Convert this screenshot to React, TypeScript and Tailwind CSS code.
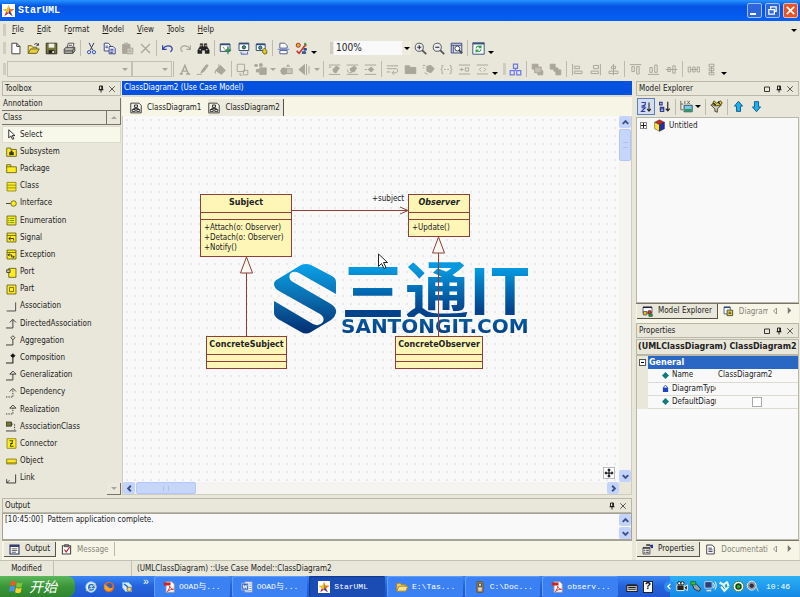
import React from "react";

type IconProps = { name: string; className?: string };

const Svg = ({ children, className = "size-[14px]" }: { children: React.ReactNode; className?: string }) => (
  <svg viewBox="0 0 16 16" className={className + " shrink-0"} fill="none" stroke="#222" strokeWidth="1.2" aria-hidden="true">
    {children}
  </svg>
);

const G = "#a9a799";

const shapes: Record<string, React.ReactNode> = {
  new: <path d="M3.5 1.5h6l4 4v9h-10zM9.5 1.5v4h4" fill="#fff" stroke="#444" />,
  open: (
    <>
      <path d="M1.500 14V4.500h4l1.500 2h5v2" fill="#f5e67a" stroke="#6b6420" />
      <path d="M1.500 14l3-5.500h10.500l-3 5.500z" fill="#e8cf3c" stroke="#6b6420" />
      <path d="M9 3c2-2 4-1 5 1M14 1.500V4h-2.500" stroke="#333" />
    </>
  ),
  save: (
    <>
      <path d="M1.500 1.500h13v13h-13z" fill="#77763a" stroke="#33331c" />
      <path d="M4.500 2h7v5h-7z" fill="#f1f1ea" stroke="none" />
      <path d="M4.500 10h7v4h-7z" fill="#222" stroke="none" />
      <path d="M9 11h2v2.500H9z" fill="#eee" stroke="none" />
    </>
  ),
  print: (
    <>
      <path d="M5 7l1.500-5.500h7L12 7" fill="#fff" stroke="#555" />
      <path d="M1.500 8.500L4 6.500h10.500V11l-2.500 3H1.500z" fill="#b5b4ac" stroke="#444" />
      <path d="M2 11h10M12 14v-4l2-3M7 4h4" stroke="#444" />
    </>
  ),
  cut: (
    <>
      <path d="M5 1l4.500 9M11 1L6.500 10" stroke="#333a66" />
      <circle cx="5" cy="12.500" r="2" stroke="#2d4fc0" />
      <circle cx="11" cy="12.500" r="2" stroke="#2d4fc0" />
    </>
  ),
  copy: (
    <>
      <path d="M1.500 1.500h5l2.500 2.500v7H1.500z" fill="#fff" stroke="#3a4684" />
      <path d="M7.500 5.500h5l2.500 2.500v6.500H7.500zM9 9h4M9 11h4M9 13h3M3 5h3M3 7h3" fill="#eef" stroke="#3a4684" />
    </>
  ),
  paste: (
    <>
      <path d="M2 3h9v11H2z" fill={G} stroke={G} />
      <path d="M4.500 1.500h4v2h-4z" fill="#ddd" stroke={G} />
      <path d="M7.500 7.500h7v7h-7z" fill="#d6d4c8" stroke={G} />
      <path d="M9 10h4M9 12h4" stroke={G} />
    </>
  ),
  del: <path d="M2.500 2.500l11 11M13.500 2.500l-11 11" stroke={G} strokeWidth="1.600" />,
  undo: <path d="M2 4v5h5M2.500 8.500C5 4 12 3.500 13.500 7c.8 2-.5 4-2 5" stroke="#3244a8" strokeWidth="1.500" />,
  redo: <path d="M14 4v5H9M13.500 8.500C11 4 4 3.500 2.500 7c-.8 2 .5 4 2 5" stroke={G} strokeWidth="1.400" />,
  find: (
    <>
      <path d="M4 2h3v3l1 1 1-1V2h3v3l3 5v4h-5v-4H6v4H1v-4l3-5z" fill="#222" stroke="#222" strokeWidth=".6" />
      <path d="M3 9.500h2M11 9.500h2M5 3.500v2M11 3.500v2" stroke="#ddd" />
    </>
  ),
  win1: (
    <>
      <path d="M1.500 2.500h12v9h-12z" fill="#fff" stroke="#334b78" />
      <path d="M1.500 3h12" stroke="#334b78" strokeWidth="2" />
      <path d="M11 5l1 4 3 1-3 1-1 4-1-4-3-1 3-1z" fill="#3a9a52" stroke="#287540" strokeWidth=".6" />
      <path d="M5 6l2 3" stroke="#9a9420" />
    </>
  ),
  win2: (
    <>
      <path d="M2.500 1.500h12v9h-12z" fill="#fff" stroke="#334b78" />
      <path d="M2.500 2h12" stroke="#334b78" strokeWidth="2" />
      <path d="M5 12v3h8v-3M7 14h1" stroke="#556dcc" />
      <circle cx="8.500" cy="6.500" r="2" fill="#3c9a60" stroke="#246" />
    </>
  ),
  win3: (
    <>
      <path d="M1.500 2.500h11v8h-11z" fill="#fff" stroke="#334b78" />
      <path d="M1.500 3h11" stroke="#334b78" strokeWidth="2" />
      <circle cx="6.500" cy="7" r="2" fill="#3aa0a0" stroke="#246" />
      <path d="M9.500 9.500l2-2 3 3V14l-3 1-2-2z" fill="#d8c832" stroke="#7b6c10" />
    </>
  ),
  pagebreak: (
    <>
      <path d="M3.500 1.500h6l3 3v3h-9zM3.500 10.500h9v4h-9z" fill="#fff" stroke="#555f8e" />
      <path d="M1 9h14" stroke="#5a78d8" />
    </>
  ),
  verify: (
    <>
      <circle cx="4" cy="4" r="2.500" fill="#e0b830" stroke="#a52c22" />
      <path d="M2 11l3 3 6-8 3-3" stroke="#c8362a" strokeWidth="2" />
      <path d="M11 8h3v2h-3zM9 12h4v2H9z" fill="#3d72c8" stroke="#284a88" />
      <circle cx="12.500" cy="2.500" r="1.500" fill="#3a9a52" stroke="none" />
    </>
  ),
  zoomin: (
    <>
      <circle cx="6.500" cy="6.500" r="5" fill="#e9eaf2" stroke="#555" />
      <path d="M10 10l5 5" stroke="#555" strokeWidth="2.200" />
      <path d="M4 6.500h5M6.500 4v5" stroke="#333" strokeWidth="1.400" />
    </>
  ),
  zoomout: (
    <>
      <circle cx="6.500" cy="6.500" r="5" fill="#e9eaf2" stroke="#555" />
      <path d="M10 10l5 5" stroke="#555" strokeWidth="2.200" />
      <path d="M4 6.500h5" stroke="#333" strokeWidth="1.400" />
    </>
  ),
  fit: (
    <>
      <path d="M1.500 1.500h13v12h-13zM1.500 4h13M4 4v9" fill="#dfe3f2" stroke="#3c4a7c" />
      <circle cx="9" cy="8" r="3" fill="#fff" stroke="#444" />
      <path d="M11 10l4 4" stroke="#444" strokeWidth="2" />
    </>
  ),
  refresh: (
    <>
      <path d="M1 1h14v14H1z" fill="#fff" stroke="#3a5378" />
      <path d="M1 2h14" stroke="#3a5378" strokeWidth="2" />
      <path d="M5 8c0-3 4-4 5.500-1.500M11 9c0 3-4 4-5.500 1.500M11 4v3H8M5 13v-3h3" stroke="#2c9a46" strokeWidth="1.300" />
    </>
  ),
  fontA: <path d="M2 13.500h4M10 13.500h5M4 13L8.500 3l4 10M5.500 10h6" stroke={G} strokeWidth="1.800" />,
  pen: <path d="M1 14h6M6 12l2-4 5-6 2 1-5 7-3 2z" fill={G} stroke={G} />,
  fill: <path d="M2 9l6-6 6 6-5 5zM6 1v6M2 9c-1 2-1 3 0 4" fill={G} stroke={G} />,
  dashbox: (
    <>
      <path d="M1.500 1.500h9v9h-9z" stroke={G} />
      <path d="M9 9h5.500v5.500H9zM5 12v3h3" stroke={G} />
    </>
  ),
  blocks: <path d="M7 6h8v8H7zM1 2h3v2H1zM3 8h3v3H3zM7 1h3v3H7z" fill={G} stroke={G} />,
  shapes: (
    <>
      <circle cx="5" cy="10" r="4" fill={G} stroke={G} />
      <path d="M8 5l2-3 2 3M8 7h7v6H8z" fill="#c9c7b9" stroke={G} />
    </>
  ),
  flip: <path d="M10.500 1v14M1 8l7-6v12zM13.500 4v9" fill={G} stroke={G} />,
  suppress: (
    <>
      <path d="M1 2.500h14M1 14h14M1 5h3" stroke={G} />
      <path d="M6 8l4-4 4 2-4 6-3-1z" fill={G} stroke={G} />
    </>
  ),
  suppress2: (
    <>
      <path d="M1 2.500h14M1 14h14M2 8c-1 4 4 5 6 3" stroke={G} />
      <path d="M5 7l5-3 3 2-3 5-4-1z" fill={G} stroke={G} />
    </>
  ),
  suppress3: (
    <>
      <path d="M1 2.500h14M1 14h14M1 8h3" stroke={G} />
      <path d="M5 8l4-3 3 3-3 3z" fill={G} stroke={G} />
    </>
  ),
  wrap: <path d="M1 3.500h14M1 7h12c2 0 2 5-1 5H8M1 11h4M10 9.500L7.500 12l2.500 2.500" stroke={G} />,
  folder: <path d="M1.500 13V3.500h5l1.500 2h6.500V13z" fill={G} stroke={G} />,
  stereo: <path d="M6 4l5-1 4 4-4 5-5-2zM1 3h3M1 6h2M3 12l4 2" fill={G} stroke={G} />,
  braces: <path d="M4 3H2.500v4L1 8l1.500 1v4H4M12 3h1.500v4L15 8l-1.500 1v4H12M5 8h2M9 8h2" stroke={G} />,
  plusop: <path d="M1 2.500h14M1 13.500h14M2 8h5M4.500 6v4M9 6h4v4H9z" stroke={G} />,
  angles: <path d="M1 2.500h14M1 13.500h14M6.500 5.500L4 8l2.500 2.500M9.500 5.500L12 8l-2.500 2.500" stroke={G} />,
  tree: <path d="M5.500 1.500h5v5h-5zM1.500 9.500h5v5h-5zM9.500 9.500h5v5h-5zM8 6.500v3" stroke="#6f78e0" strokeWidth="1.500" fill="#e6e6fa" />,
  front: (
    <>
      <path d="M1.500 1.500h7v6h-7zM8.500 9.500h6v5h-6z" fill={G} stroke={G} />
      <path d="M4.500 5h8v7h-8z" fill="#c3c1b3" stroke={G} />
    </>
  ),
  back: <path d="M1.500 1.500h6v6h-6zM8.500 8.500h6v6h-6zM6 6h5v4H6z" fill={G} stroke={G} />,
  alignL: <path d="M2 1v14M4.500 4h6v3h-6zM4.500 10h9v3h-9z" stroke={G} />,
  alignR: <path d="M14 1v14M5.500 3h6v4h-6zM2.500 10h9v3h-9z" stroke={G} />,
  alignC: <path d="M8 1v14M5.500 4h5v3h-5zM2.500 10h11v3h-11z" stroke={G} />,
  alignT: <path d="M1 2h14M3.500 4.500h3v6h-3zM9.500 4.500h3v9h-3z" stroke={G} />,
  alignB: <path d="M1 14h14M3.500 5.500h3v6h-3zM9.500 2.500h3v9h-3z" stroke={G} />,
  alignM: <path d="M1 8h14M3.500 5.500h3v5h-3zM9.500 3.500h3v9h-3z" stroke={G} />,
  spaceH: <path d="M1.500 5h3v6h-3zM7 5h3v6H7zM12.500 5h3v6h-3zM4 8h9" stroke={G} />,
  spaceV: <path d="M5 1.500h6v3H5zM5 6.500h6v3H5zM5 11.500h6v3H5zM8 4v9" stroke={G} />,
  classdoc: (
    <>
      <path d="M1 1.500h11l3 3v10H1z" fill="#f4f3e4" stroke="#333" />
      <path d="M6 4h4v3H6zM3 10h4v2.500H3zM9 10h4v2.500H9zM8 7v2M5 10V8.500h6V10" stroke="#222" fill="#fff" />
    </>
  ),
  cursor: <path d="M4 1v12l3-3 2.500 5 2-1L9 9.500h4z" fill="#fff" stroke="#111" />,
  subsystem: (
    <>
      <path d="M1 3h6v2h8v10H1z" fill="#ffee1c" stroke="#5e5a12" />
      <path d="M5 13V9h2V7h2v2h2v4z" fill="#333" stroke="#333" strokeWidth=".6" />
    </>
  ),
  package: <path d="M1 2.500h6v3h8V14H1zM1 5.500h6" fill="#ffee1c" stroke="#5e5a12" />,
  class: <path d="M1.500 2h13v12.500h-13zM1.500 6h13M1.500 10h13" fill="#ffee1c" stroke="#86801a" />,
  interface: (
    <>
      <path d="M0 8h7" stroke="#222" />
      <circle cx="11" cy="8" r="4" fill="#ffee1c" stroke="#5e5a12" />
    </>
  ),
  enum: (
    <>
      <path d="M1.500 1.500h13v13h-13z" fill="#ffee1c" stroke="#5e5a12" />
      <path d="M3 5h2M3 8h2M3 11h2M6 5h6M6 8h6M6 11h6" stroke="#4e8c2c" />
    </>
  ),
  signal: (
    <>
      <path d="M1.500 1.500h13v13h-13zM1.500 5h13" fill="#ffee1c" stroke="#5e5a12" />
      <path d="M7 7L4 9.500 7 12M4 9.500h7v3" stroke="#222" />
    </>
  ),
  exception: (
    <>
      <path d="M1.500 1.500h13v13h-13zM1.500 5h13" fill="#ffee1c" stroke="#5e5a12" />
      <path d="M5 6.500L3 8.500l2 2M3 8.500h5v3h4M10 9.500l2 2-2 2" stroke="#222" />
    </>
  ),
  port: (
    <>
      <path d="M4 2h10.500v13H4z" fill="#ffee1c" stroke="#5e5a12" />
      <path d="M1 4h5v4H1z" fill="#cfc9a0" stroke="#333" />
    </>
  ),
  part: (
    <>
      <path d="M1.500 1.500h13v13h-13z" fill="#ffee1c" stroke="#5e5a12" />
      <path d="M5 5h6v6H5z" stroke="#5e5a12" />
    </>
  ),
  assoc: <path d="M1 14.500h13V2" stroke="#333" />,
  dassoc: <path d="M0 14.500h10V2M5.500 6.500L10 2l4.500 4.500" stroke="#222" />,
  aggr: <path d="M0 14.500h10V7M10 1l3 3-3 3-3-3z" stroke="#222" fill="none" />,
  comp: (
    <>
      <path d="M0 14.500h10V7" stroke="#222" strokeWidth="1.600" />
      <path d="M10 1l3 3-3 3-3-3z" fill="#111" stroke="#111" />
    </>
  ),
  gen: <path d="M0 14.500h10V6M5.500 6L10 1.500 14.500 6z" stroke="#222" />,
  dep: (
    <>
      <path d="M0 14.500h10V3" stroke="#222" strokeDasharray="2 1.500" />
      <path d="M5.500 6.500L10 2l4.500 4.500" stroke="#222" />
    </>
  ),
  real: (
    <>
      <path d="M0 14.500h10V6" stroke="#222" strokeDasharray="2 1.500" />
      <path d="M5.500 6L10 1.500 14.500 6z" stroke="#222" />
    </>
  ),
  aclass: (
    <>
      <path d="M0 1.500h8v6H0z" fill="#77762a" stroke="#333" />
      <path d="M8 4.500h4M12.500 5v8" stroke="#222" strokeDasharray="2 1.500" />
      <path d="M0 14.500h15" stroke="#222" />
    </>
  ),
  connector: (
    <>
      <path d="M1.500 1h13v14h-13z" fill="#ffee1c" stroke="#86801a" />
      <path d="M5 4h5M10 4L6 12M6 12h5M6 8h4" stroke="#222" />
    </>
  ),
  object: <path d="M1 4.500h14v7H1zM1 10h14" fill="#ffe81c" stroke="#77711a" />,
  link: <path d="M1 9v5.500h13V2M1 14.500l4-4" stroke="#222" />,
  sortA: (
    <>
      <path d="M2 2h5v3L2 7h5M2 9h5l-5 5h5" stroke="#2f3da0" strokeWidth="1.500" />
      <path d="M12 2v11M9.500 10.500L12 13.500l2.500-3" stroke="#222" strokeWidth="1.400" />
    </>
  ),
  sortB: (
    <>
      <path d="M2 3h3v3H2zM3 9h4v5H3zM2 11h5" stroke="#2f3da0" strokeWidth="1.500" />
      <path d="M12 2v11M9.500 10.500L12 13.500l2.500-3" stroke="#222" strokeWidth="1.400" />
    </>
  ),
  viewmode: (
    <>
      <path d="M1 1v11h3M1 5h3M6 1v4M9 1l3 4M12 1L9 5" stroke="#666" />
      <path d="M5 6.500h10v8H5z" fill="#7cc8e8" stroke="#356" />
      <path d="M6 11h8v3H6z" fill="#2f9a58" stroke="none" />
    </>
  ),
  filter: (
    <>
      <path d="M1 6h13l-5 5v4l-3-1v-3z" fill="#cfcfc4" stroke="#4c4a2a" />
      <path d="M3 5l2-4 3 3 5-3 2 3-4 3H5z" fill="#e6cf32" stroke="#4c4a2a" />
      <path d="M10 2l2 3M4 4l3 2" stroke="#222" strokeWidth="1.600" />
    </>
  ),
  up: <path d="M8 1.500l5 6H10.500V14h-5V7.500H3z" fill="#19b4ee" stroke="#1a5a94" />,
  down: <path d="M8 14.500l5-6H10.500V2h-5v6.500H3z" fill="#19b4ee" stroke="#1a5a94" />,
  cube: (
    <>
      <path d="M8 1l6 3-6 3-6-3z" fill="#c82820" stroke="#333" strokeWidth=".6" />
      <path d="M2 4l6 3v8l-6-3z" fill="#ffe22a" stroke="#333" strokeWidth=".6" />
      <path d="M14 4L8 7v8l6-3z" fill="#2430a8" stroke="#111" strokeWidth=".6" />
    </>
  ),
  mexp: (
    <>
      <path d="M1.500 1.500h13v9h-13z" fill="#fff" stroke="#334b78" />
      <path d="M1.500 2h13" stroke="#223" strokeWidth="2" />
      <path d="M2 8h5v5H2z" fill="#e0c020" stroke="#554" />
      <circle cx="11" cy="9" r="2.500" fill="#c8352a" stroke="#622" />
      <path d="M10 12h5v3h-5z" fill="#2e9a50" stroke="#263" />
    </>
  ),
  dexp: (
    <>
      <path d="M1.500 1.500h9v10h-9z" fill="#fff" stroke="#334b78" />
      <path d="M1.500 2h9" stroke="#334b78" strokeWidth="2" />
      <path d="M6 6h8v8H6z" fill="#f3dc4a" stroke="#333" />
      <path d="M8 9h4M8 11h4" stroke="#333" />
    </>
  ),
  props: (
    <>
      <path d="M1.500 5h10v9.500h-10z" fill="#fff" stroke="#333" />
      <path d="M1.500 6h10M3 9h2M6 9h4M3 12h2M6 12h4" stroke="#333" strokeWidth="1.500" />
      <path d="M6 1.500h5l2 2h2" stroke="#333" strokeWidth="2" />
      <path d="M13 1h3v5h-3z" fill="#2430a8" stroke="none" />
    </>
  ),
  doc: <path d="M2.500 1.500h8l3 3v10h-11zM5 6h5M5 8.500h6M5 11h6" fill="#fff" stroke="#223" />,
  output: (
    <>
      <path d="M1.500 1.500h13v13h-13z" fill="#fff" stroke="#222c66" strokeWidth="1.600" />
      <path d="M1.500 3h13" stroke="#222c66" strokeWidth="2.500" />
      <path d="M4 7h8M4 9.500h8M4 12h6" stroke="#444" />
    </>
  ),
  message: (
    <>
      <path d="M2 2.500h12v12H2z" fill="#fff" stroke="#444" strokeWidth="1.500" />
      <path d="M5 1h6v3H5z" fill="#888" stroke="#444" />
      <path d="M5 8l2.500 3.500L13 4" stroke="#c02c3c" strokeWidth="1.800" />
    </>
  ),
  star: (
    <>
      <path d="M0 0h16v16H0z" fill="#fff" stroke="none" />
      <path d="M8 1l2 5h5.500L11 9.500l2 5.500-5-3.500z" fill="#e87820" stroke="none" />
      <path d="M8 1L6 6 .5 6.500 5 9.500 8 11.500z" fill="#e8c020" stroke="none" />
      <path d="M5 9.500L3 15l5-3.500z" fill="#d02838" stroke="none" />
      <path d="M9 8l4 7-5-3.500z" fill="#2848a8" stroke="none" />
    </>
  ),
  pin: <path d="M5 2h6v7H5zM9.500 2v7M3 9.500h10M8 10v5" stroke="#111" strokeWidth="1.800" />,
  close: <path d="M2.500 2.500l11 11M13.500 2.500l-11 11" stroke="#333" strokeWidth="1.600" />,
  max: <path d="M3 4h10v9H3z" stroke="#222" strokeWidth="1.800" />,
  ie: (
    <>
      <circle cx="8" cy="8" r="7" fill="#e6f3ff" stroke="#8cc4f6" />
      <path d="M5 8.500h7c0-5-7-5-7 0s5 4 6.500 2" stroke="#2675d0" strokeWidth="2" />
      <path d="M2 12C0 15 6 12 14 3" stroke="#f0d46a" />
    </>
  ),
  firefox: (
    <>
      <circle cx="8" cy="8" r="7" fill="#e8681c" stroke="none" />
      <circle cx="8.500" cy="6.500" r="4" fill="#3460b8" stroke="none" />
      <path d="M2 3c0 3 3 3 5 5s4 2 6 1c-1 5-9 6-11 1z" fill="#f6a42a" stroke="none" />
    </>
  ),
  qq: (
    <>
      <path d="M2 2h8l4 4v8H6l-4-5z" fill="#d6ecff" stroke="#78b8f0" />
      <path d="M4 4l4 3 2 5" stroke="#2768b8" strokeWidth="2" />
      <circle cx="11" cy="11" r="3" fill="#f1d37a" stroke="#86703a" />
    </>
  ),
  pdf: (
    <>
      <path d="M4 1h8l3 3v11H4z" fill="#fff" stroke="#999" />
      <path d="M1 2h9v4H1z" fill="#cc2222" stroke="none" />
      <path d="M6 14c2-3 3-5 3-7 1 3 3 4 5 4-3 0-6 1-8 3z" stroke="#d03030" strokeWidth="1.300" />
    </>
  ),
  word: (
    <>
      <path d="M5 1h10v14H5zM11 4h3M11 7h3M11 10h3M6 13h8" fill="#fff" stroke="#6d8dc8" />
      <path d="M1 3h9v9H1z" fill="#3a66b8" stroke="#fff" strokeWidth=".6" />
      <path d="M3 5l1 5 1.500-4L7 10l1-5" stroke="#fff" />
    </>
  ),
  efolder: (
    <>
      <path d="M1 13V3h5l1 2h6v3" fill="#f2d264" stroke="#a88420" />
      <path d="M1 13.500L4 7h12l-3 6.500z" fill="#fbe58a" stroke="#a88420" />
    </>
  ),
  device: (
    <>
      <path d="M4 1h7l1 1v13H4z" fill="#b89a62" stroke="#5c4a20" />
      <path d="M6 3h4v4H6z" fill="#d8f0d0" stroke="#444" />
      <path d="M6 10h4M6 12h4" stroke="#fff" />
    </>
  ),
  keyboard: <path d="M1 6h14v8H1zM3 8.500h10M3 11h10M2 5h12" fill="#ddd" stroke="#222" strokeWidth="1.500" />,
  camera: (
    <>
      <path d="M1 6h9v7H1zM10 9l4-3v7l-4-3" fill="#222" stroke="#eee" />
      <circle cx="4" cy="4" r="2" fill="#eee" />
      <circle cx="8" cy="4" r="2" fill="#eee" />
    </>
  ),
  usb: (
    <>
      <path d="M2 3l6 2 5 6-2 3-6-3z" fill="#9aa6a6" stroke="#234" />
      <path d="M1 2h6v4H1z" fill="#3abc3a" stroke="#174" />
    </>
  ),
  net: (
    <>
      <path d="M1 2h9v8H1z" fill="#22427c" stroke="#ccd" />
      <path d="M3 13h6" stroke="#ddd" strokeWidth="2" />
      <path d="M11.500 4c1.500 2 1.500 4 0 6M13.500 2c2 3 2 7 0 10" stroke="#fff" />
    </>
  ),
  recycle: (
    <>
      <path d="M2 3l5 3 5-4M4 8l4 5 5-5M7 6l1 7M11 3l2 5" stroke="#dff4ee" strokeWidth="3" />
      <path d="M5 7l3 4M10 5l1 4" stroke="#2e8a8a" />
    </>
  ),
  eye: (
    <>
      <circle cx="8" cy="8" r="6.500" fill="#fff" stroke="#3c8c3c" />
      <circle cx="8" cy="8" r="3" fill="#3cae2a" stroke="#174a17" strokeWidth="2" />
    </>
  ),
  volume: (
    <>
      <circle cx="7" cy="7" r="5.500" fill="#8d95a5" stroke="#e6e6ea" />
      <circle cx="7" cy="7" r="2" fill="#333" />
      <path d="M13 9l2 5" stroke="#ddd" />
    </>
  ),
};

const Icon = ({ name, className }: IconProps) => <Svg className={className}>{shapes[name]}</Svg>;

const Tool = ({ name }: { name: string }) => (
  <button aria-label={name} className="flex h-4 w-[18px] shrink-0 items-center justify-center">
    <Icon name={name} className="size-[13px]" />
  </button>
);
const Tools = ({ names }: { names: string[] }) => (
  <>
    {names.map((n, i) => (
      <Tool key={i} name={n} />
    ))}
  </>
);
const Sep = () => (
  <span className="flex w-1 shrink-0 justify-center">
    <span className="h-4 w-px bg-[#bdbbab]" />
  </span>
);
const Grip = () => <span className="h-3 w-[3px] shrink-0 bg-[#cfcdbe]" />;
const Caret = ({ className = "border-t-black" }: { className?: string }) => (
  <span className={"size-0 shrink-0 border-x-[3px] border-t-[3px] border-x-transparent " + className} />
);
const Overflow = () => (
  <button aria-label="More buttons" className="flex h-4 w-2 shrink-0 items-end justify-center pb-[2px]">
    <Caret />
  </button>
);

const PanelHeader = ({ title, max = false }: { title: string; max?: boolean }) => (
  <header className="flex h-[15px] shrink-0 items-center border border-[#b9b7a8] pr-1 pl-[2px]">
    <h2 className="flex-1">{title}</h2>
    {max && (
      <button aria-label="Maximize" className="mr-1">
        <Icon name="max" className="size-[8px]" />
      </button>
    )}
    <button aria-label="Pin" className="mr-[3px]">
      <Icon name="pin" className="size-[8px]" />
    </button>
    <button aria-label="Close">
      <Icon name="close" className="size-[8px]" />
    </button>
  </header>
);

const ScrollButton = ({ dir }: { dir: "up" | "down" | "left" | "right" }) => {
  const d = { up: "M4 10l4-4 4 4", down: "M4 6l4 4 4-4", left: "M10 4L6 8l4 4", right: "M6 4l4 4-4 4" }[dir];
  return (
    <button aria-label={"Scroll " + dir} className="flex size-3 shrink-0 items-center justify-center rounded-[2px] bg-[#c3d3fb]">
      <svg viewBox="0 0 16 16" className="size-[11px]" fill="none" stroke="#3b5188" strokeWidth="2.800">
        <path d={d} />
      </svg>
    </button>
  );
};

const toolbox: [string, string][] = [
  ["cursor", "Select"],
  ["subsystem", "Subsystem"],
  ["package", "Package"],
  ["class", "Class"],
  ["interface", "Interface"],
  ["enum", "Enumeration"],
  ["signal", "Signal"],
  ["exception", "Exception"],
  ["port", "Port"],
  ["part", "Part"],
  ["assoc", "Association"],
  ["dassoc", "DirectedAssociation"],
  ["aggr", "Aggregation"],
  ["comp", "Composition"],
  ["gen", "Generalization"],
  ["dep", "Dependency"],
  ["real", "Realization"],
  ["aclass", "AssociationClass"],
  ["connector", "Connector"],
  ["object", "Object"],
  ["link", "Link"],
];

const Toolbox = () => (
  <aside className="flex w-[119px] shrink-0 flex-col">
    <PanelHeader title="Toolbox" />
    <button className="mt-[2px] h-[13px] shrink-0 border-r border-b border-[#77756a] pl-px text-left">Annotation</button>
    <div className="flex h-[14px] shrink-0">
      <button className="flex-1 border-r border-b border-[#77756a] pl-px text-left">Class</button>
      <button aria-label="Scroll toolbox up" className="flex w-[14px] items-center justify-center border-r border-b border-[#77756a]">
        <span className="size-0 border-x-[3px] border-b-[3px] border-x-transparent border-b-[#a9a799]" />
      </button>
    </div>
    <ul className="mt-px flex flex-1 flex-col">
      {toolbox.map(([icon, label], i) => (
        <li key={label} className="flex flex-1">
          <button className={"flex flex-1 items-center gap-[3px] pl-[3px] " + (i === 0 ? "border border-[#dddbcb] bg-[#f8f8ea]" : "border border-transparent")}>
            <Icon name={icon} className="size-[11px]" />
            {label}
          </button>
        </li>
      ))}
    </ul>
    <div className="-mt-[4px] flex h-3 shrink-0 justify-end">
      <button aria-label="Scroll toolbox down" className="flex w-[14px] items-center justify-center border-r border-b border-[#77756a] bg-[#ebe9dc]">
        <Caret className="border-t-[#a9a799]" />
      </button>
    </div>
  </aside>
);

type UmlProps = { name: string; ops?: string[]; italic?: boolean; className: string };
const UmlClass = ({ name, ops = [], italic, className }: UmlProps) => (
  <div className={"absolute flex flex-col border border-[#8e4038] bg-[#fdf6b6] leading-[10px] " + className}>
    <div className={"h-[17px] pt-[3px] text-center font-['DejaVu_Sans',sans-serif] font-bold " + (italic ? "italic" : "")}>{name}</div>
    <div className="h-2 border-y border-[#8e4038]" />
    <div className="flex-1 pt-[3px] pl-[3px] whitespace-nowrap">
      {ops.map((o) => (
        <div key={o}>{o}</div>
      ))}
    </div>
  </div>
);

const Logo = () => (
  <div className="absolute top-[147px] left-[150px] flex">
    <svg viewBox="0 0 64 71" className="h-[71px] w-16" aria-hidden="true">
      <defs>
        <linearGradient id="mark" gradientUnits="userSpaceOnUse" x1="0" y1="0" x2="0" y2="71">
          <stop offset="0" stopColor="#08a4ec" />
          <stop offset=".5" stopColor="#0a6cae" />
          <stop offset="1" stopColor="#032c70" />
        </linearGradient>
      </defs>
      <path
        fill="url(#mark)"
        d="M1 21Q1 18 5 16L28 2Q33 0 38 2L59 13Q63 15 63 19V31L26 10Q20 7 17 11Q15 16 20 19L58 41Q64 45 63 50Q62 54 58 57L38 69Q33 72 28 69L5 56Q1 53 1 50V38L40 61Q46 64 50 59Q52 54 47 51L6 28Q1 25 1 21Z"
      />
    </svg>
    <div className="-mt-[6px] ml-1">
      <div className="h-[60px] bg-linear-to-b from-[#0799df] from-20% to-[#04428a] to-90% bg-clip-text font-['Noto_Sans_CJK_SC',sans-serif] text-[64px] leading-[60px] font-bold whitespace-nowrap text-transparent">
        三通IT
      </div>
      <div className="bg-linear-to-b from-[#075fa4] to-[#043d82] bg-clip-text font-['DejaVu_Sans',sans-serif] text-[20px] leading-[18px] font-bold whitespace-nowrap text-transparent">
        SANTONGIT.COM
      </div>
    </div>
  </div>
);

const Canvas = () => (
  <div className="relative flex-1 overflow-hidden bg-[#f9f9f9] bg-[radial-gradient(circle,#e7e7ec_1px,transparent_1px)] bg-[size:8px_8px]">
    <Logo />
    <svg className="absolute inset-0 size-full" fill="none" stroke="#8e4038" aria-hidden="true">
      <path d="M169 94.500H284M277 91l8 3.500-8 3.500M123.500 157V220M315.500 137V220" />
      <path d="M123.500 141l6 16h-12zM315.500 121l6 16h-12z" fill="#fbf7f2" />
      <path d="M255.500 138v12.500l3-3 2.500 5 2-1-2.500-5h4z" fill="#fff" stroke="#222" />
    </svg>
    <UmlClass name="Subject" ops={["+Attach(o: Observer)", "+Detach(o: Observer)", "+Notify()"]} className="top-[78px] left-[77px] h-[63px] w-[92px]" />
    <UmlClass name="Observer" italic ops={["+Update()"]} className="top-[78px] left-[285px] h-[43px] w-[62px]" />
    <UmlClass name="ConcreteSubject" className="top-[220px] left-[83px] h-[33px] w-[81px]" />
    <UmlClass name="ConcreteObserver" className="top-[220px] left-[272px] h-[33px] w-[88px]" />
    <span className="absolute top-[78px] left-[249px] leading-[10px]">+subject</span>
    <button aria-label="Navigate diagram" className="absolute right-1 bottom-[3px] flex size-3 items-center justify-center border border-[#bbb] bg-white">
      <svg viewBox="0 0 16 16" className="size-[10px]" fill="none" stroke="#222" strokeWidth="2">
        <path d="M8 2v12M2 8h12M6 4l2-2 2 2M6 12l2 2 2-2M4 6L2 8l2 2M12 6l2 2-2 2" />
      </svg>
    </button>
  </div>
);

const Editor = () => (
  <section className="flex min-h-0 flex-1 flex-col">
    <h2 className="h-[14px] shrink-0 bg-[#0551df] pl-[2px] leading-[14px] text-white">ClassDiagram2 (Use Case Model)</h2>
    <div className="flex h-[21px] shrink-0 items-end border-t-2 border-[#dddbcd] bg-[#f7f6e6] pl-2">
      <button className="flex h-[17px] items-center gap-[5px] pr-[7px]">
        <Icon name="classdoc" className="size-[12px]" />
        ClassDiagram1
      </button>
      <button className="flex h-[17px] items-center gap-[5px] border-r border-[#55534a] bg-[#eceadd] pr-[3px]">
        <Icon name="classdoc" className="size-[12px]" />
        ClassDiagram2
      </button>
    </div>
    <div className="flex min-h-0 flex-1 border border-t-0 border-[#cfcdbf]">
      <div className="flex min-w-0 flex-1 flex-col">
        <Canvas />
        <div className="flex h-3 shrink-0 bg-[#f5f4f0]">
          <ScrollButton dir="left" />
          <span className="ml-px flex w-[60px] items-center justify-center rounded-[2px] border border-[#b3c6f5] bg-[#c5d5fc]">
            <span className="h-[5px] w-[6px] border-x border-[#aac0f0]" />
          </span>
          <span className="flex-1" />
          <ScrollButton dir="right" />
        </div>
      </div>
      <div className="flex w-3 shrink-0 flex-col bg-[#f5f4f0]">
        <ScrollButton dir="up" />
        <span className="mt-px flex h-8 items-center justify-center rounded-[2px] border border-[#b3c6f5] bg-[#c5d5fc]">
          <span className="h-[6px] w-[5px] border-y border-[#aac0f0]" />
        </span>
        <span className="flex-1" />
        <ScrollButton dir="down" />
        <span className="h-3 bg-[#e9e7d9]" />
      </div>
    </div>
  </section>
);

const Tab = ({ icon, children, active }: { icon: string; children: React.ReactNode; active?: boolean }) => (
  <button
    className={
      "flex h-[15px] items-center gap-[5px] px-[5px] whitespace-nowrap " +
      (active ? "border-r border-b border-[#55534a] bg-[#e9e7d9]" : "text-[#85837a]")
    }
  >
    <Icon name={icon} className="size-[11px]" />
    {children}
  </button>
);
const TabArrows = () => (
  <div className="flex h-[13px] items-center gap-2 pr-[6px] pl-1">
    <button aria-label="Previous tab">
      <svg viewBox="0 0 8 8" className="size-[6px]" fill="none" stroke="#777">
        <path d="M6 0L2 4l4 4z" />
      </svg>
    </button>
    <button aria-label="Next tab">
      <svg viewBox="0 0 8 8" className="size-[7px]" fill="#777">
        <path d="M2 0l4 4-4 4z" />
      </svg>
    </button>
  </div>
);

const Output = () => (
  <section className="mt-[3px] flex shrink-0 flex-col">
    <PanelHeader title="Output" />
    <div className="flex h-[28px] border border-b-2 border-[#a5a396] bg-[#f9f9f9]">
      <p className="flex-1 pl-[2px]">[10:45:00]&nbsp; Pattern application complete.</p>
      <div className="flex w-3 flex-col justify-between">
        <ScrollButton dir="up" />
        <ScrollButton dir="down" />
      </div>
    </div>
    <div className="flex h-[19px] bg-[#f7f6e6] pt-px pl-[2px]">
      <Tab icon="output" active>Output</Tab>
      <div className="h-[14px] border-r border-[#b9b7a8]">
        <Tab icon="message">Message</Tab>
      </div>
    </div>
  </section>
);

const PropRow = ({ label, lock, children }: { label: string; lock?: boolean; children?: React.ReactNode }) => (
  <tr className="h-[13px]">
    <th scope="row" className="overflow-hidden border-b border-[#dddbd0] pl-[14px] text-left font-normal">
      <span className="flex items-center gap-[3px] whitespace-nowrap">
        <svg viewBox="0 0 8 8" className="size-[7px] shrink-0">
          {lock ? (
            <>
              <path d="M2 4V2q2-3 4 0v2" fill="none" stroke="#2043c8" />
              <path d="M1 3h6v5H1z" fill="#2043c8" />
            </>
          ) : (
            <path d="M4 0l4 4-4 4-4-4z" fill="#137a7c" />
          )}
        </svg>
        {label}
      </span>
    </th>
    <td className="border-b border-[#dddbd0] pl-[2px]">{children}</td>
  </tr>
);

const RightSide = () => (
  <aside className="flex w-[163px] shrink-0 flex-col">
    <PanelHeader title="Model Explorer" max />
    <div className="flex h-[21px] shrink-0 items-center pl-px">
      <button aria-label="Sort by storing order" className="flex h-[17px] w-[18px] items-center justify-center border border-[#5c80b8] bg-[#d5def0]">
        <Icon name="sortA" className="size-[12px]" />
      </button>
      <Tool name="sortB" />
      <Sep />
      <button aria-label="View mode" className="flex w-[26px] items-center justify-center gap-[2px]">
        <Icon name="viewmode" className="size-[13px]" />
        <Caret />
      </button>
      <Sep />
      <Tool name="filter" />
      <Sep />
      <Tool name="up" />
      <Tool name="down" />
    </div>
    <div className="min-h-0 flex-1 border border-[#b9b7a8] bg-[#f9f9f9]">
      <div className="flex h-[15px] items-center pl-[3px]">
        <button aria-label="Expand Untitled" className="flex size-[7px] items-center justify-center border border-[#888]">
          <svg viewBox="0 0 5 5" className="size-[5px]" stroke="#222">
            <path d="M0 2.500h5M2.500 0v5" />
          </svg>
        </button>
        <Icon name="cube" className="mr-[3px] ml-[6px] size-[13px]" />
        Untitled
      </div>
    </div>
    <div className="flex h-[20px] shrink-0 items-start border-t border-[#77756a] bg-[#f7f6e6] pl-px">
      <Tab icon="mexp" active>Model Explorer</Tab>
      <div className="min-w-0 flex-1 overflow-hidden">
        <Tab icon="dexp">Diagram Explorer</Tab>
      </div>
      <TabArrows />
    </div>
    <PanelHeader title="Properties" max />
    <h3 className="mt-px h-4 shrink-0 overflow-hidden border border-[#b9b7a8] pl-px font-['DejaVu_Sans',sans-serif] leading-[13px] font-bold whitespace-nowrap">(UMLClassDiagram) ClassDiagram2</h3>
    <div className="h-[185px] shrink-0 border border-[#b9b7a8] bg-[#f9f9f9]">
      <div className="flex">
        <div className="flex w-[11px] shrink-0 justify-center bg-[#e9e7d9] pt-[3px]">
          <button aria-label="Collapse General" className="flex size-[7px] items-center justify-center border border-[#555] bg-white">
            <span className="h-px w-[3px] bg-black" />
          </button>
        </div>
        <div className="min-w-0 flex-1">
          <table className="w-full table-fixed border-collapse leading-[12px]">
            <colgroup>
              <col className="w-[68px]" />
              <col />
            </colgroup>
            <thead>
              <tr className="h-[13px]">
                <th colSpan={2} className="bg-[#2a66c4] pl-px text-left font-['DejaVu_Sans',sans-serif] font-bold text-white">General</th>
              </tr>
            </thead>
            <tbody>
              <PropRow label="Name">ClassDiagram2</PropRow>
              <PropRow label="DiagramType" lock />
              <PropRow label="DefaultDiagram">
                <input type="checkbox" aria-label="DefaultDiagram" className="ml-[34px] block size-[10px] appearance-none border border-[#aaa] bg-white" />
              </PropRow>
            </tbody>
          </table>
        </div>
      </div>
    </div>
    <div className="flex h-[20px] shrink-0 items-start border-t border-[#77756a] bg-[#f7f6e6] pt-px pl-px">
      <Tab icon="props" active>Properties</Tab>
      <div className="min-w-0 flex-1 overflow-hidden">
        <Tab icon="doc">Documentation</Tab>
      </div>
      <TabArrows />
    </div>
  </aside>
);

const tasks: [string, string][] = [
  ["pdf", "OOAD与..."],
  ["word", "OOAD与..."],
  ["star", "StarUML"],
  ["efolder", "E:\\Tas..."],
  ["device", "C:\\Doc..."],
  ["pdf", "observ..."],
];

const Taskbar = () => (
  <footer className="flex h-[21px] shrink-0 items-stretch bg-linear-to-b from-[#3b86f4] via-[#2462dc] to-[#2059d0] font-['Liberation_Mono','Noto_Sans_CJK_SC',monospace] text-[8px] text-white">
    <button className="flex w-[75px] shrink-0 items-center gap-[5px] rounded-r-lg bg-linear-to-b from-[#5cb85a] via-[#3a9638] to-[#2f852f] pl-[9px] font-['Noto_Sans_CJK_SC',sans-serif] text-[14px] leading-[18px] italic">
      <svg viewBox="0 0 16 16" className="size-[15px]" aria-hidden="true">
        <path d="M2 3q3-2 5.500 0L6.500 7.500Q4 6 1 7.500z" fill="#f0582a" />
        <path d="M8.500 3.500q3 2 6 0L13.500 8q-3 2-6 0z" fill="#7cc83a" />
        <path d="M1 8.500q3-2 5.500 0l-1 5Q3 12 0 13.500z" fill="#4a90f0" />
        <path d="M7.500 9q3 2 6 0l-1 5q-3 2-6 0z" fill="#f8d028" />
      </svg>
      <span className="pb-[2px]">开始</span>
    </button>
    <div className="flex w-[79px] shrink-0 items-center gap-[6px] pl-[10px]">
      {["ie", "firefox", "qq"].map((n) => (
        <button key={n} aria-label={n}>
          <Icon name={n} className="size-[12px]" />
        </button>
      ))}
      <span className="mb-2 pl-1 text-[10px] leading-[8px]">»</span>
    </div>
    <div className="flex min-w-0 flex-1 gap-[2px]">
      {tasks.map(([icon, label], i) => (
        <button
          key={i}
          className={
            "flex max-w-[160px] min-w-0 flex-1 items-center gap-[4px] rounded-[2px] pl-[9px] whitespace-nowrap " +
            (i === 2 ? "bg-[#1a4cb4] shadow-[inset_1px_1px_1px_#123a90]" : "bg-[#3c81f3] shadow-[inset_1px_1px_1px_#62a0fa]")
          }
        >
          <Icon name={icon} className="size-[12px]" />
          {label}
        </button>
      ))}
    </div>
    <div className="flex w-[52px] shrink-0 items-center gap-[5px] pl-[8px]">
      <button aria-label="Keyboard"><Icon name="keyboard" className="size-[12px]" /></button>
      <button aria-label="Help" className="flex h-3 w-[10px] items-center justify-center border border-[#222] bg-white text-[10px] leading-none font-bold text-black">?</button>
    </div>
    <div className="flex w-[130px] shrink-0 items-center gap-px bg-linear-to-b from-[#2cb0f4] to-[#1588e4] pr-[10px]">
      <button aria-label="Show hidden icons" className="-ml-[6px] flex size-[11px] items-center justify-center rounded-full bg-[#2d8cf0]">
        <svg viewBox="0 0 8 8" className="size-[7px]" fill="none" stroke="#fff" strokeWidth="1.500"><path d="M5 1L2 4l3 3" /></svg>
      </button>
      {["camera", "usb", "net", "recycle", "eye", "volume"].map((n) => (
        <Icon key={n} name={n} className="size-[13px]" />
      ))}
      <time className="flex-1 text-right">10:46</time>
    </div>
  </footer>
);

export default function App() {
  return (
    <div className="flex h-screen flex-col overflow-hidden bg-[#e9e7d9] font-['DejaVu_Sans_Condensed','DejaVu_Sans',sans-serif] text-[8px] leading-[12px] text-[#222]">
      <header className="flex h-[21px] shrink-0 items-center bg-linear-to-b from-[#2a92ff] via-[#0553e4] via-30% to-[#0560f6] pr-[2px] pl-[2px]">
        <Icon name="star" className="size-[13px]" />
        <h1 className="ml-[3px] flex-1 font-['Liberation_Mono',monospace] text-[10px] font-bold text-white">StarUML</h1>
        <div className="flex gap-[3px]">
          <button aria-label="Minimize" className="flex size-[15px] items-end rounded-[2px] border border-[#9fbdf8] bg-[#2f66dc] p-[2px]">
            <span className="h-[2px] w-[6px] bg-white" />
          </button>
          <button aria-label="Restore" className="flex size-[15px] items-center justify-center rounded-[2px] border border-[#9fbdf8] bg-[#2f66dc]">
            <svg viewBox="0 0 12 12" className="size-[11px]" fill="none" stroke="#fff" strokeWidth="1.400"><path d="M4 4V2h6v5H8M2 5h6v5H2z" /></svg>
          </button>
          <button aria-label="Close window" className="flex size-[15px] items-center justify-center rounded-[2px] border border-[#f0b8a0] bg-[#e2562c]">
            <svg viewBox="0 0 12 12" className="size-[11px]" fill="none" stroke="#fff" strokeWidth="1.800"><path d="M2 2l8 8M10 2l-8 8" /></svg>
          </button>
        </div>
      </header>

      <nav className="flex h-[18px] shrink-0 items-center pr-[3px] pl-[3px]">
        <Grip />
        <div className="ml-[6px] flex flex-1 gap-[13px]">
          {["File", "Edit", "Format", "Model", "View", "Tools", "Help"].map((m) => {
            const k = m === "Format" ? 1 : 0;
            return (
              <button key={m}>
                {m.slice(0, k)}
                <span className="underline">{m[k]}</span>
                {m.slice(k + 1)}
              </button>
            );
          })}
        </div>
        <Caret />
      </nav>

      <div className="flex h-[18px] shrink-0 items-center pl-[3px]">
        <Grip />
        <Tools names={["new", "open", "save", "print"]} />
        <Sep />
        <Tools names={["cut", "copy", "paste", "del"]} />
        <Sep />
        <Tools names={["undo", "redo", "find"]} />
        <Sep />
        <Tools names={["win1", "win2", "win3"]} />
        <Sep />
        <Tools names={["pagebreak", "verify"]} />
        <Overflow />
        <span className="w-3 shrink-0" />
        <Grip />
        <div className="ml-px flex w-[77px] shrink-0 items-center bg-[#f9f9f9]">
          <select aria-label="Zoom" className="h-[14px] min-w-0 flex-1 appearance-none pl-[2px] text-[10px] leading-[14px]">
            <option>100%</option>
          </select>
          <span className="pointer-events-none flex h-[14px] w-[9px] items-center justify-center bg-[#eeecdf]">
            <Caret />
          </span>
        </div>
        <Tools names={["zoomin", "zoomout", "fit"]} />
        <Sep />
        <Tools names={["refresh"]} />
        <Overflow />
      </div>

      <div className="flex h-6 shrink-0 items-center pl-[3px]">
        <Grip />
        {[
          ["Font", "w-[125px]"],
          ["Font size", "w-[40px]"],
        ].map(([label, w]) => (
          <div key={label} className={"ml-px -mr-px flex h-4 shrink-0 items-center border border-[#c3c1b2] pr-[3px] " + w}>
            <select aria-label={label} disabled className="h-3 min-w-0 flex-1 appearance-none" />
            <Caret className="border-t-[#a9a799]" />
          </div>
        ))}
        <Sep />
        <Tools names={["fontA", "pen", "fill"]} />
        <Sep />
        <Tools names={["dashbox", "blocks"]} />
        <span className="flex w-2 justify-center"><Caret className="border-t-[#a9a799]" /></span>
        <Tools names={["shapes", "flip"]} />
        <span className="flex w-2 justify-center"><Caret className="border-t-[#a9a799]" /></span>
        <Sep />
        <Tools names={["suppress", "suppress2", "suppress3"]} />
        <Sep />
        <Tools names={["wrap", "folder", "stereo", "braces", "plusop", "angles"]} />
        <Overflow />
        <span className="w-1 shrink-0" />
        <Grip />
        <Tools names={["tree"]} />
        <Sep />
        <Tools names={["front", "back"]} />
        <Sep />
        <Tools names={["alignL", "alignR", "alignC"]} />
        <Sep />
        <Tools names={["alignT", "alignB", "alignM"]} />
        <Sep />
        <Tools names={["spaceH", "spaceV"]} />
        <Overflow />
      </div>

      <main className="flex min-h-0 flex-1 gap-1 pr-px pl-[2px]">
        <div className="flex min-w-0 flex-1 flex-col">
          <div className="flex min-h-0 flex-1 gap-px">
            <Toolbox />
            <Editor />
          </div>
          <Output />
        </div>
        <RightSide />
      </main>

      <div className="flex h-[16px] shrink-0 items-stretch border-t border-[#c3c1b2]">
        <span className="flex w-[54px] items-center justify-center border-r border-[#c3c1b2]">Modified</span>
        <span className="w-[78px] border-r border-[#c3c1b2]" />
        <span className="flex flex-1 items-center pl-[5px]">(UMLClassDiagram) ::Use Case Model::ClassDiagram2</span>
      </div>

      <Taskbar />
    </div>
  );
}
